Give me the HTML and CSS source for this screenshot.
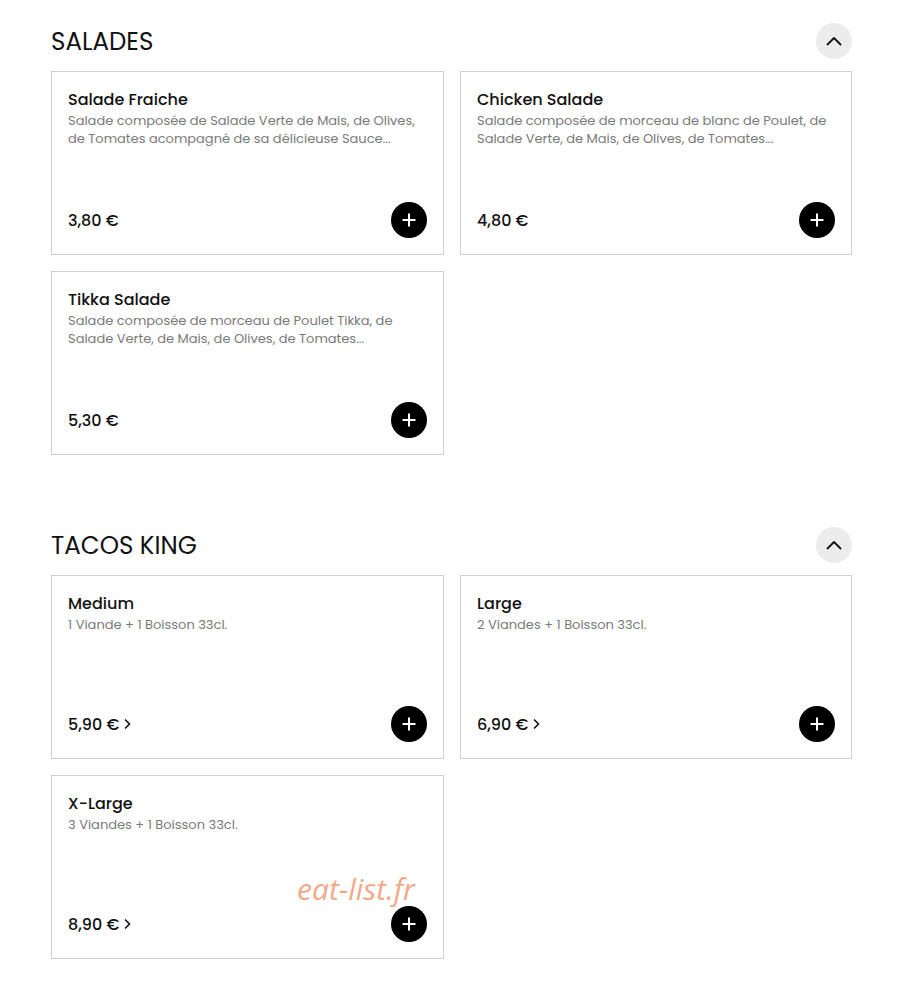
FILE: index.html
```html
<!DOCTYPE html>
<html lang="fr">
<head>
<meta charset="utf-8">
<link rel="stylesheet" href="styles.css">
</head>
<body>
<main class="menu">
  <section class="category">
    <header class="cat-head">
      <h2 class="cat-title">SALADES</h2>
      <button class="toggle" aria-label="Replier"><svg width="16" height="10" viewBox="0 0 16 10"><path d="M1.5 8.5 L8 2 L14.5 8.5" fill="none" stroke="#111" stroke-width="1.8" stroke-linecap="round" stroke-linejoin="round"/></svg></button>
    </header>
    <div class="grid">
      <article class="card">
        <h3 class="name">Salade Fraiche</h3>
        <p class="desc">Salade composée de Salade Verte de Mais, de Olives, de Tomates acompagné de sa délicieuse Sauce...</p>
        <div class="foot"><span class="price">3,80 €</span><button class="add" aria-label="Ajouter"><svg width="16" height="16" viewBox="0 0 16 16"><path d="M8 1.5v13M1.5 8h13" stroke="#fff" stroke-width="2"/></svg></button></div>
      </article>
      <article class="card">
        <h3 class="name">Chicken Salade</h3>
        <p class="desc">Salade composée de morceau de blanc de Poulet, de Salade Verte, de Mais, de Olives, de Tomates...</p>
        <div class="foot"><span class="price">4,80 €</span><button class="add" aria-label="Ajouter"><svg width="16" height="16" viewBox="0 0 16 16"><path d="M8 1.5v13M1.5 8h13" stroke="#fff" stroke-width="2"/></svg></button></div>
      </article>
      <article class="card">
        <h3 class="name">Tikka Salade</h3>
        <p class="desc">Salade composée de morceau de Poulet Tikka, de Salade Verte, de Mais, de Olives, de Tomates...</p>
        <div class="foot"><span class="price">5,30 €</span><button class="add" aria-label="Ajouter"><svg width="16" height="16" viewBox="0 0 16 16"><path d="M8 1.5v13M1.5 8h13" stroke="#fff" stroke-width="2"/></svg></button></div>
      </article>
    </div>
  </section>

  <section class="category">
    <header class="cat-head">
      <h2 class="cat-title">TACOS KING</h2>
      <button class="toggle" aria-label="Replier"><svg width="16" height="10" viewBox="0 0 16 10"><path d="M1.5 8.5 L8 2 L14.5 8.5" fill="none" stroke="#111" stroke-width="1.8" stroke-linecap="round" stroke-linejoin="round"/></svg></button>
    </header>
    <div class="grid">
      <article class="card">
        <h3 class="name">Medium</h3>
        <p class="desc">1 Viande + 1 Boisson 33cl.</p>
        <div class="foot"><span class="price">5,90 € <svg class="more" width="8" height="12" viewBox="0 0 8 12"><path d="M2 1.5 L6.5 6 L2 10.5" fill="none" stroke="#111" stroke-width="1.6"/></svg></span><button class="add" aria-label="Ajouter"><svg width="16" height="16" viewBox="0 0 16 16"><path d="M8 1.5v13M1.5 8h13" stroke="#fff" stroke-width="2"/></svg></button></div>
      </article>
      <article class="card">
        <h3 class="name">Large</h3>
        <p class="desc">2 Viandes + 1 Boisson 33cl.</p>
        <div class="foot"><span class="price">6,90 € <svg class="more" width="8" height="12" viewBox="0 0 8 12"><path d="M2 1.5 L6.5 6 L2 10.5" fill="none" stroke="#111" stroke-width="1.6"/></svg></span><button class="add" aria-label="Ajouter"><svg width="16" height="16" viewBox="0 0 16 16"><path d="M8 1.5v13M1.5 8h13" stroke="#fff" stroke-width="2"/></svg></button></div>
      </article>
      <article class="card">
        <h3 class="name">X-Large</h3>
        <p class="desc">3 Viandes + 1 Boisson 33cl.</p>
        <div class="foot"><span class="price">8,90 € <svg class="more" width="8" height="12" viewBox="0 0 8 12"><path d="M2 1.5 L6.5 6 L2 10.5" fill="none" stroke="#111" stroke-width="1.6"/></svg></span><button class="add" aria-label="Ajouter"><svg width="16" height="16" viewBox="0 0 16 16"><path d="M8 1.5v13M1.5 8h13" stroke="#fff" stroke-width="2"/></svg></button></div>
        <span class="watermark">eat-list.fr</span>
      </article>
    </div>
  </section>
</main>
</body>
</html>
```

FILE: styles.css
```css
* { box-sizing: border-box; }
html, body { margin: 0; padding: 0; background: #fff; }
body {
  font-family: "Poppins", "Open Sans", "Noto Sans", sans-serif;
  color: #111;
}
.menu {
  padding: 23px 53px 0 51px;
}
.category { margin-bottom: 72px; }
.cat-head {
  display: flex;
  align-items: center;
  justify-content: space-between;
  height: 36px;
  margin-bottom: 12px;
}
.cat-title {
  margin: 0;
  font-size: 24.5px;
  font-weight: 400;
  color: #111;
}
.toggle {
  width: 36px;
  height: 36px;
  border-radius: 50%;
  border: none;
  background: #ececec;
  display: flex;
  align-items: center;
  justify-content: center;
  padding: 0;
}
.grid {
  display: grid;
  grid-template-columns: 393px 392px;
  column-gap: 16px;
  row-gap: 16px;
}
.card {
  position: relative;
  height: 184px;
  border: 1px solid #cfcfcf;
  padding: 16px;
  display: flex;
  flex-direction: column;
}
.name {
  margin: 0;
  font-size: 16px;
  font-weight: 500;
  line-height: 22px;
  padding-top: 1px;
  color: #111;
}
.desc {
  margin: 1px 0 0;
  font-size: 13px;
  line-height: 18px;
  color: #7a7a7a;
  font-weight: 400;
}
.foot {
  margin-top: auto;
  display: flex;
  align-items: center;
  justify-content: space-between;
  height: 36px;
}
.price {
  font-size: 16px;
  font-weight: 500;
  color: #111;
  display: flex;
  align-items: center;
  gap: 2px;
}
.more { margin-left: 2px; }
.add {
  width: 36px;
  height: 36px;
  border-radius: 50%;
  border: none;
  background: #000;
  padding: 0;
  display: flex;
  align-items: center;
  justify-content: center;
}
.watermark {
  position: absolute;
  left: 245px;
  top: 98px;
  font-family: "Open Sans", sans-serif;
  font-style: italic;
  font-size: 30px;
  line-height: 30px;
  color: #f2a98a;
  pointer-events: none;
}
```
